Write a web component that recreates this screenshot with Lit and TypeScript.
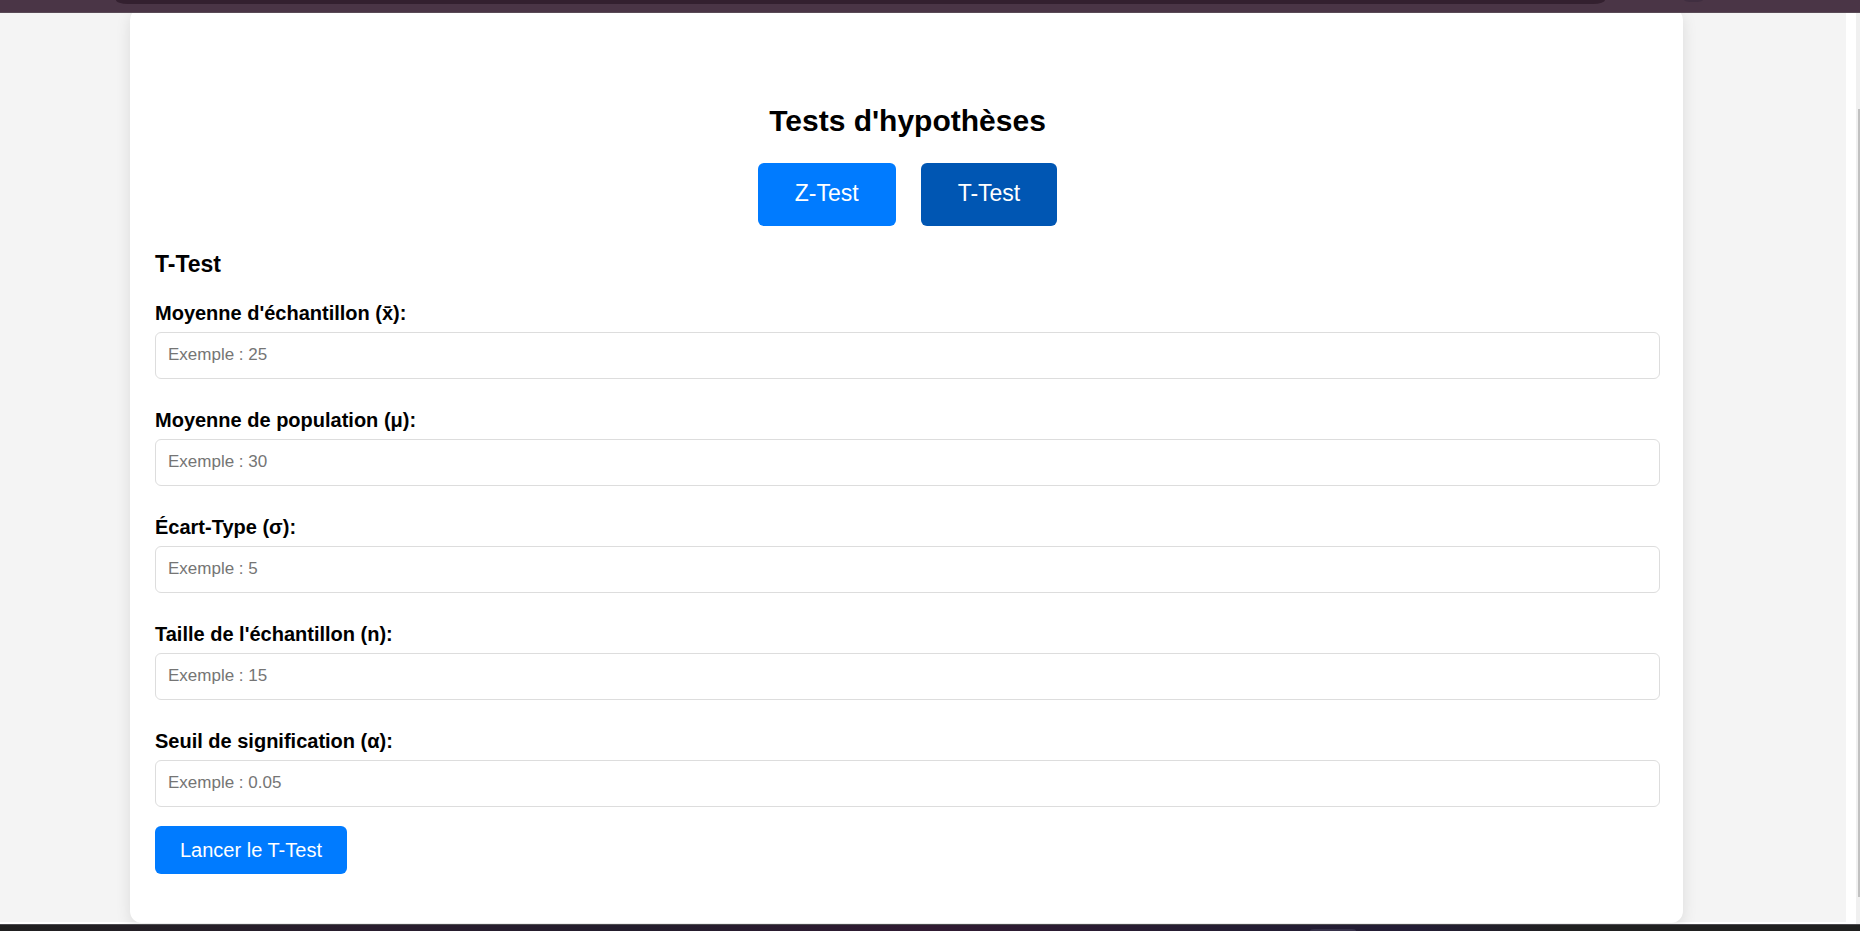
import { LitElement, html, css } from "lit";
import { customElement, state } from "lit/decorators.js";

interface Field {
  id: string;
  label: string;
  hint: string;
}

const FIELDS: Field[] = [
  { id: "mean", label: "Moyenne d'échantillon (x̄):", hint: "Exemple : 25" },
  { id: "population", label: "Moyenne de population (μ):", hint: "Exemple : 30" },
  { id: "deviation", label: "Écart-Type (σ):", hint: "Exemple : 5" },
  { id: "size", label: "Taille de l'échantillon (n):", hint: "Exemple : 15" },
  { id: "alpha", label: "Seuil de signification (α):", hint: "Exemple : 0.05" },
];

@customElement("app-root")
export class AppRoot extends LitElement {
  @state() private test = "T-Test";

  static styles = css`
    :host {
      display: flex;
      flex-direction: column;
      height: 100vh;
      overflow: hidden;
      background: #fff;
      color: #000;
      font-family: "Liberation Sans", Arial, sans-serif;
    }
    * {
      box-sizing: border-box;
    }
    .toolbar {
      flex: none;
      display: flex;
      gap: 79px;
      height: 13px;
      padding: 0 157px 0 116px;
      background: #4a3546;
      border-bottom: 1px solid #594a56;
    }
    .address {
      flex: 1;
      height: 4px;
      background: #33202f;
      border-radius: 0 0 12px 12px / 0 0 4px 4px;
    }
    .badge {
      width: 19px;
      height: 2px;
      background: #402e40;
      border-radius: 0 0 9px 9px / 0 0 2px 2px;
    }
    .view {
      flex: 1;
      min-height: 0;
      display: flex;
      overflow: hidden;
    }
    .page {
      flex: 1;
      min-width: 0;
      margin: 0 10px 2px 0;
      padding: 0 163px 0 130px;
      background: #f4f4f4;
    }
    .card {
      height: calc(100% + 6px);
      margin-top: -5px;
      padding: 95px 23px 24px 25px;
      background: #fff;
      border-radius: 12px;
      box-shadow: 0 5px 15px rgba(0, 0, 0, 0.1);
    }
    .scrollbar {
      flex: none;
      width: 4px;
      padding: 96px 0 27px 2px;
      background: #f0f0f0;
    }
    .thumb {
      height: 100%;
      background: #c1c1c1;
    }
    .taskbar {
      flex: none;
      display: flex;
      justify-content: flex-end;
      align-items: flex-end;
      height: 7px;
      padding-right: 504px;
      border-top: 1px solid #4b4a4e;
      background: linear-gradient(90deg, #202020 0%, #291d2e 20%, #231d2c 34%, #301a32 50%, #241d32 66%, #231d35 76%, #202020 84%);
    }
    .task {
      width: 46px;
      height: 2px;
      background: #37324a;
      border-radius: 4px 4px 0 0 / 2px 2px 0 0;
    }
    h1 {
      margin: 0;
      font-size: 30px;
      line-height: 36px;
      text-align: center;
    }
    .tabs {
      display: flex;
      justify-content: center;
      gap: 25px;
      margin-top: 24px;
    }
    button {
      border: 0;
      border-radius: 6px;
      background: #007bff;
      color: #fff;
      font-family: inherit;
      cursor: pointer;
    }
    .tab {
      padding: 17px 37px 19px;
      font-size: 23px;
      line-height: 27px;
    }
    .tab.active {
      background: #0056b3;
    }
    h2 {
      margin: 24px 0 0;
      font-size: 23px;
      line-height: 28px;
    }
    .fields {
      display: grid;
      gap: 30px;
      margin-top: 24px;
    }
    .field {
      display: grid;
      gap: 7px;
    }
    label {
      font-size: 20px;
      line-height: 23px;
      font-weight: bold;
    }
    input {
      width: 100%;
      height: 47px;
      padding: 0 12px 2px;
      border: 1px solid #ddd;
      border-radius: 6px;
      background: #fff;
      font-family: inherit;
      font-size: 17px;
    }
    input::placeholder {
      color: #757575;
    }
    .run {
      margin-top: 19px;
      padding: 12px 25px;
      font-size: 20px;
      line-height: 24px;
    }
  `;

  private tab(name: string) {
    return html`<button
      type="button"
      class="tab ${this.test === name ? "active" : ""}"
      aria-pressed=${this.test === name}
      @click=${() => (this.test = name)}
    >${name}</button>`;
  }

  render() {
    return html`
      <div class="toolbar">
        <div class="address"></div>
        <div class="badge"></div>
      </div>
      <div class="view">
        <main class="page">
          <section class="card">
            <h1>Tests d'hypothèses</h1>
            <div class="tabs">${this.tab("Z-Test")}${this.tab("T-Test")}</div>
            <h2>${this.test}</h2>
            <form @submit=${(e: Event) => e.preventDefault()}>
              <div class="fields">
                ${FIELDS.map(
                  (f) => html`<div class="field">
                    <label for=${f.id}>${f.label}</label>
                    <input id=${f.id} type="text" inputmode="decimal" placeholder=${f.hint} />
                  </div>`
                )}
              </div>
              <button class="run" type="submit">Lancer le ${this.test}</button>
            </form>
          </section>
        </main>
        <div class="scrollbar"><div class="thumb"></div></div>
      </div>
      <div class="taskbar"><div class="task"></div></div>
    `;
  }
}
